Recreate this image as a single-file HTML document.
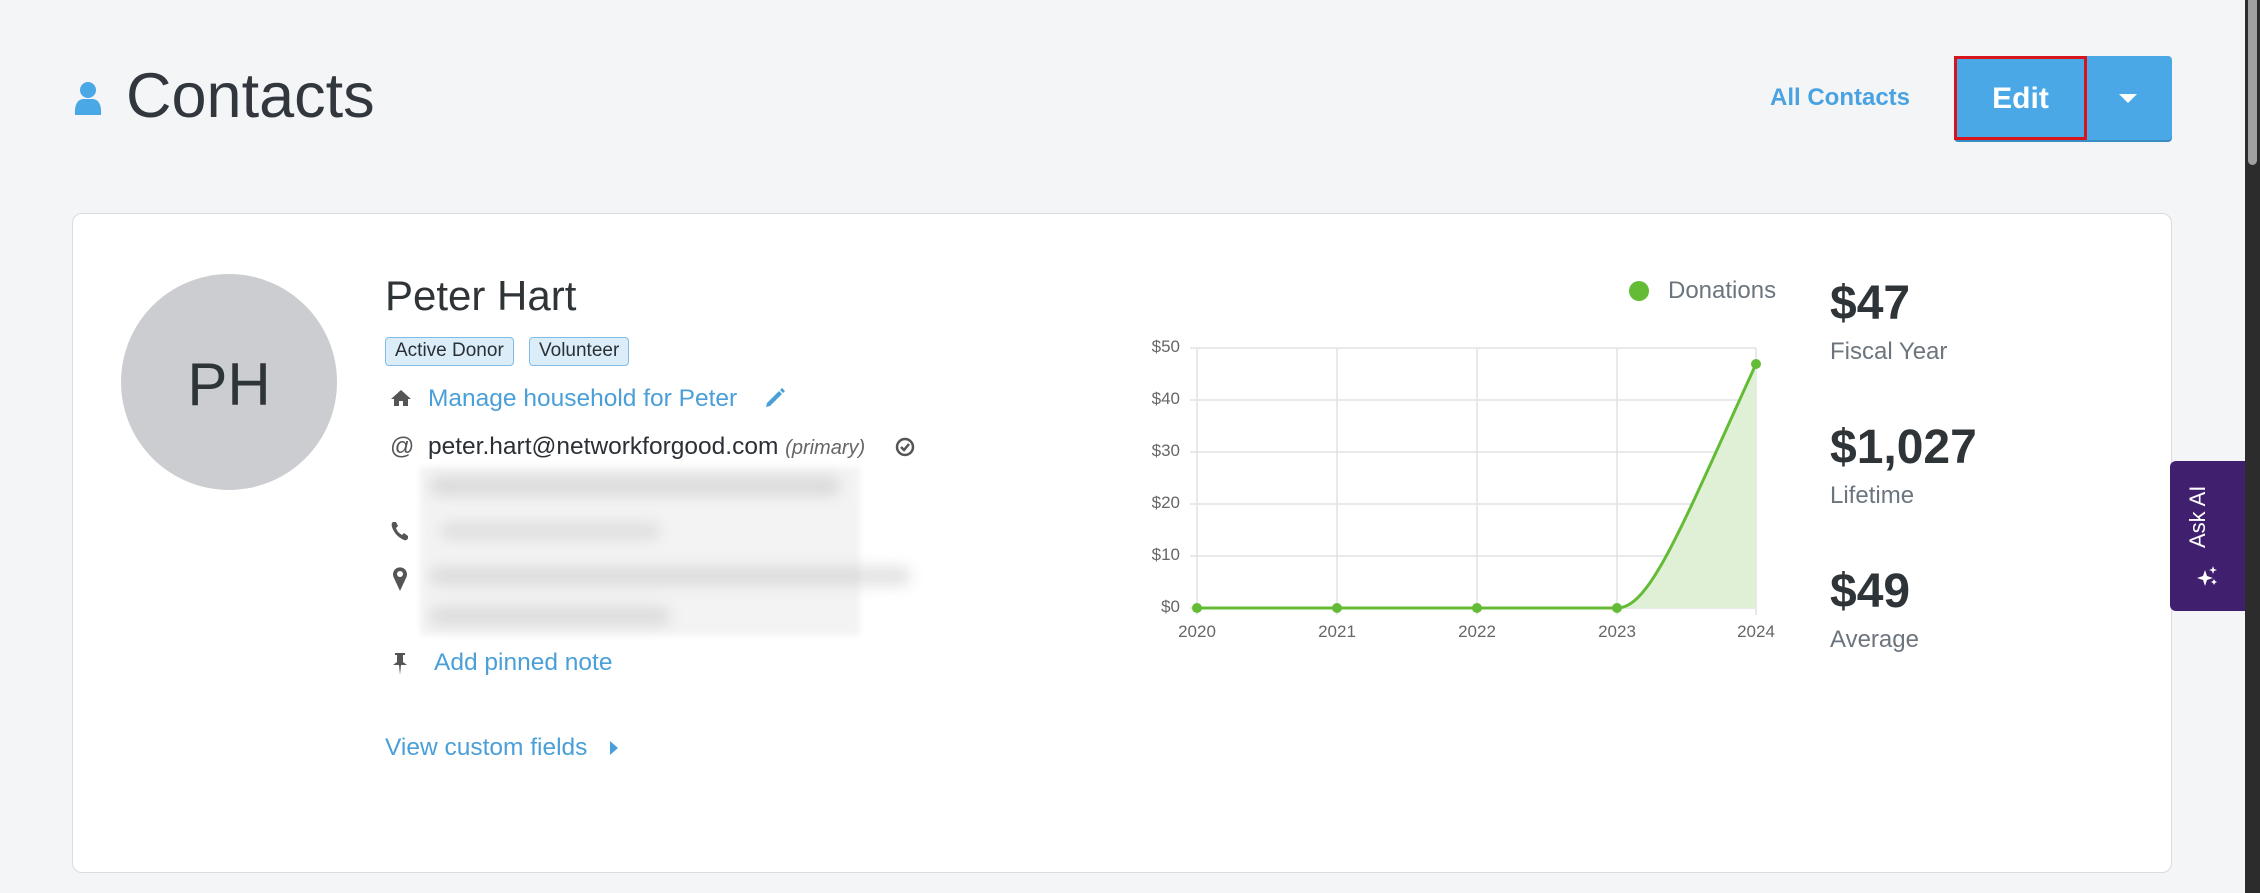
<!DOCTYPE html>
<html><head><meta charset="utf-8"><style>
*{margin:0;padding:0;box-sizing:border-box}
body{width:2260px;height:893px;background:#f4f5f7;font-family:"Liberation Sans",sans-serif;position:relative;overflow:hidden;color:#343a40}
.abs{position:absolute;white-space:nowrap}
.link{color:#4a9fd8}
.card{position:absolute;left:72px;top:213px;width:2100px;height:660px;background:#fff;border:1px solid #d8dbe0;border-radius:10px}
.tag{position:absolute;top:337px;height:29px;background:#dcedfa;border:1.5px solid #7fbde6;border-radius:4px;font-size:19px;line-height:26px;padding:0 9px;color:#2b3036}
.blur{position:absolute;background:#c8c8c8;filter:blur(7px);border-radius:8px}
.ylab{position:absolute;right:1080px;font-size:17px;color:#666;font-family:"Liberation Sans",sans-serif}
.xlab{position:absolute;top:622px;font-size:17px;color:#666;width:60px;text-align:center}
.big{position:absolute;left:1830px;font-size:48px;font-weight:bold;color:#2f3438}
.sub{position:absolute;left:1830px;font-size:24px;color:#6c757d}
</style></head><body>
<svg class="abs" style="left:74px;top:81px" width="28" height="36" viewBox="0 0 28 36"><circle cx="14" cy="9" r="8" fill="#4aa8e6"/><path d="M1 34 Q0 19 9 18 L19 18 Q28 19 27 34 Z" fill="#4aa8e6"/></svg>
<div class="abs" style="left:126px;top:60px;font-size:63px;color:#31373c">Contacts</div>
<div class="abs link" style="left:1770px;top:84px;font-size:24px;font-weight:bold;color:#4aa3e0">All Contacts</div>
<div class="abs" style="left:1954px;top:56px;width:218px;height:84px;background:#4aa8e6;border-radius:4px;box-shadow:0 2px 0 #3a8cc4"></div>
<div class="abs" style="left:1954px;top:56px;width:133px;height:84px;border:3px solid #d8141c"></div>
<div class="abs" style="left:1954px;top:82px;width:133px;text-align:center;color:#fff;font-size:30px;font-weight:bold">Edit</div>
<svg class="abs" style="left:2118px;top:93px" width="20" height="12"><path d="M1 1 L19 1 L10 10 Z" fill="#fff"/></svg>

<div class="card"></div>
<div class="abs" style="left:121px;top:274px;width:216px;height:216px;border-radius:50%;background:#cbcdd0"></div>
<div class="abs" style="left:121px;top:350px;width:216px;text-align:center;font-size:60px;color:#2f3438">PH</div>
<div class="abs" style="left:385px;top:272px;font-size:42px;color:#2f3438">Peter Hart</div>
<div class="tag" style="left:385px">Active Donor</div>
<div class="tag" style="left:529px">Volunteer</div>

<svg class="abs" style="left:390px;top:389px" width="22" height="18" viewBox="0 0 22 18"><path d="M11 1 L21 10 L18 10 L18 17 L13 17 L13 12 L9 12 L9 17 L4 17 L4 10 L1 10 Z" fill="#555"/></svg>
<div class="abs link" style="left:428px;top:385px;font-size:24.5px">Manage household for Peter</div>
<svg class="abs" style="left:763px;top:386px" width="24" height="24" viewBox="0 0 24 24"><path d="M4 17 L16 5 L19 8 L7 20 L3 21 Z M17 4 L19 2 L22 5 L20 7 Z" fill="#4a9fd8"/></svg>
<div class="abs" style="left:390px;top:433px;font-size:24px;color:#555">@</div>
<div class="abs" style="left:428px;top:433px;font-size:24.5px;color:#2b3036">peter.hart@networkforgood.com <i style="font-size:20px;color:#666">(primary)</i></div>
<svg class="abs" style="left:895px;top:437px" width="20" height="20" viewBox="0 0 20 20"><circle cx="10" cy="10" r="8" fill="none" stroke="#555" stroke-width="2.5"/><path d="M6 10 L9 13 L14 7" fill="none" stroke="#555" stroke-width="2.5"/></svg>

<div class="abs" style="left:420px;top:467px;width:440px;height:168px;background:#f3f3f3;filter:blur(3px)"></div>
<div class="blur" style="left:430px;top:476px;width:410px;height:20px;opacity:.55"></div>
<div class="blur" style="left:440px;top:522px;width:220px;height:18px;opacity:.45"></div>
<div class="blur" style="left:430px;top:566px;width:480px;height:20px;opacity:.5"></div>
<div class="blur" style="left:430px;top:606px;width:240px;height:20px;opacity:.5"></div>
<svg class="abs" style="left:390px;top:520px" width="20" height="22" viewBox="0 0 20 22"><path d="M3 2 Q1 3 2 7 Q5 16 14 20 Q17 21 18 18 L18 16 L14 13 L12 15 Q7 12 6 8 L8 6 L6 2 Z" fill="#555"/></svg>
<svg class="abs" style="left:392px;top:566px" width="16" height="26" viewBox="0 0 16 26"><path d="M8 25 L2 12 A7 7 0 1 1 14 12 Z" fill="#555"/><circle cx="8" cy="8" r="3" fill="#fff"/></svg>
<svg class="abs" style="left:391px;top:652px" width="18" height="24" viewBox="0 0 18 24"><path d="M4 1 L14 1 L14 3 L12 3 L12 10 L16 13 L2 13 L6 10 L6 3 L4 3 Z M8 13 L10 13 L9 23 Z" fill="#555"/></svg>
<div class="abs link" style="left:434px;top:649px;font-size:24.5px">Add pinned note</div>
<div class="abs link" style="left:385px;top:734px;font-size:24.5px">View custom fields</div>
<svg class="abs" style="left:609px;top:740px" width="10" height="16"><path d="M1 1 L9 8 L1 15 Z" fill="#4a9fd8"/></svg>

<!-- chart -->
<div class="abs" style="left:1629px;top:281px;width:20px;height:20px;border-radius:50%;background:#64bc36"></div>
<div class="abs" style="left:1668px;top:277px;font-size:24px;color:#6c757d">Donations</div>
<svg class="abs" style="left:1180px;top:340px" width="600" height="280">
<g stroke="#e2e2e2" stroke-width="1.5">
<line x1="10" y1="8" x2="576" y2="8"/><line x1="10" y1="60" x2="576" y2="60"/><line x1="10" y1="112" x2="576" y2="112"/><line x1="10" y1="164" x2="576" y2="164"/><line x1="10" y1="216" x2="576" y2="216"/><line x1="10" y1="268" x2="576" y2="268"/>
<line x1="17" y1="8" x2="17" y2="275"/><line x1="157" y1="8" x2="157" y2="275"/><line x1="297" y1="8" x2="297" y2="275"/><line x1="437" y1="8" x2="437" y2="275"/><line x1="576" y1="8" x2="576" y2="275"/>
</g>
<path d="M437 268 C470 268 500 190 576 24 L576 268 Z" fill="#dff0d6"/>
<path d="M17 268 L437 268 C470 268 500 190 576 24" fill="none" stroke="#64bc36" stroke-width="3"/>
<g fill="#64bc36"><circle cx="17" cy="268" r="5"/><circle cx="157" cy="268" r="5"/><circle cx="297" cy="268" r="5"/><circle cx="437" cy="268" r="5"/><circle cx="576" cy="24" r="5"/></g>
</svg>
<div class="ylab" style="top:337px">$50</div>
<div class="ylab" style="top:389px">$40</div>
<div class="ylab" style="top:441px">$30</div>
<div class="ylab" style="top:493px">$20</div>
<div class="ylab" style="top:545px">$10</div>
<div class="ylab" style="top:597px">$0</div>
<div class="xlab" style="left:1167px">2020</div>
<div class="xlab" style="left:1307px">2021</div>
<div class="xlab" style="left:1447px">2022</div>
<div class="xlab" style="left:1587px">2023</div>
<div class="xlab" style="left:1726px">2024</div>

<div class="big" style="top:276px">$47</div>
<div class="sub" style="top:338px">Fiscal Year</div>
<div class="big" style="top:420px">$1,027</div>
<div class="sub" style="top:482px">Lifetime</div>
<div class="big" style="top:564px">$49</div>
<div class="sub" style="top:626px">Average</div>

<div class="abs" style="left:2170px;top:461px;width:80px;height:150px;background:#3f1f6e;border-radius:6px 0 0 6px"></div>
<div class="abs" style="left:2185px;top:548px;transform:rotate(-90deg);transform-origin:left top;color:#fff;font-size:22px;width:80px">Ask AI</div>
<svg class="abs" style="left:2197px;top:564px" width="22" height="24" viewBox="0 0 22 24"><path d="M8 6 L10 12 L16 14 L10 16 L8 22 L6 16 L0 14 L6 12 Z M16 2 L17 5 L20 6 L17 7 L16 10 L15 7 L12 6 L15 5 Z M17 15 L18 17 L20 18 L18 19 L17 21 L16 19 L14 18 L16 17 Z" fill="#fff"/></svg>
<div class="abs" style="left:2245px;top:0;width:15px;height:893px;background:#2c2c2c"></div>
<div class="abs" style="left:2248px;top:0;width:9px;height:165px;background:#a0a0a0;border-radius:0 0 5px 5px"></div>
</body></html>
